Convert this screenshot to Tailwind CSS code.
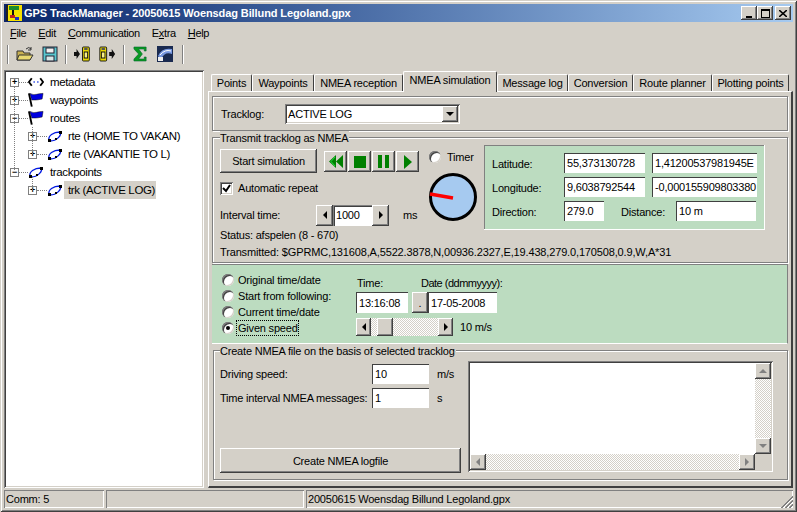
<!DOCTYPE html>
<html lang="en">
<head>
<meta charset="UTF-8">
<title>GPS TrackManager</title>
<script src="https://cdn.jsdelivr.net/npm/@tailwindcss/browser@4"></script>
</head>
<body class="bg-[#d4d0c8]">
<div class="w-[797px] h-[512px] overflow-hidden bg-[#d4d0c8] p-[4px] flex flex-col text-[11px] tracking-[-0.2px] leading-[14px] text-black font-['Liberation_Sans',sans-serif] shadow-[inset_1px_1px_0_#d4d0c8,inset_-1px_-1px_0_#404040,inset_2px_2px_0_#fff,inset_-2px_-2px_0_#808080]">

  <!-- title bar -->
  <div class="h-[18px] shrink-0 flex items-center bg-gradient-to-r from-[#0a246a] to-[#a6caf0] pl-[2px] pr-[2px]">
    <svg class="w-[16px] h-[16px] shrink-0" viewBox="0 0 16 16"><rect width="16" height="16" fill="#f6e000"/><rect x="3" y="1" width="10" height="4" fill="#1c8c2c"/><rect x="6" y="5" width="2" height="7" fill="#111"/><rect x="4" y="10" width="5" height="3" fill="#c02020"/><rect x="9" y="12" width="4" height="3" fill="#2030c0"/><rect x="0" y="0" width="2" height="16" fill="#222"/></svg>
    <span class="ml-[2px] font-bold text-[11px] tracking-[-0.1px] text-white whitespace-nowrap">GPS TrackManager - 20050615 Woensdag Billund Legoland.gpx</span>
    <div class="ml-auto flex">
      <div class="w-[16px] h-[14px] bg-[#d4d0c8] flex items-end justify-center pb-[2px] shadow-[inset_-1px_-1px_0_#404040,inset_1px_1px_0_#fff,inset_-2px_-2px_0_#808080]"><div class="w-[6px] h-[2px] bg-black"></div></div>
      <div class="w-[16px] h-[14px] bg-[#d4d0c8] flex items-center justify-center shadow-[inset_-1px_-1px_0_#404040,inset_1px_1px_0_#fff,inset_-2px_-2px_0_#808080]"><div class="w-[9px] h-[9px] border border-black border-t-2"></div></div>
      <div class="ml-[2px] w-[16px] h-[14px] bg-[#d4d0c8] flex items-center justify-center shadow-[inset_-1px_-1px_0_#404040,inset_1px_1px_0_#fff,inset_-2px_-2px_0_#808080]"><svg class="w-[8px] h-[7px]" viewBox="0 0 8 7"><path d="M0 0L8 7M8 0L0 7" stroke="#000" stroke-width="1.6"/></svg></div>
    </div>
  </div>

  <!-- menu -->
  <div class="h-[20px] mt-[1px] shrink-0 flex items-center pl-[6px] gap-[12px] tracking-[-0.35px]">
    <span><u>F</u>ile</span><span><u>E</u>dit</span><span><u>C</u>ommunication</span><span>E<u>x</u>tra</span><span><u>H</u>elp</span>
  </div>

  <!-- toolbar -->
  <div class="h-[22px] shrink-0 flex items-center pl-[3px]">
    <div class="w-[2px] h-[19px] border-l border-l-[#808080] border-r border-r-white"></div>
    <svg class="ml-[7px] w-[18px] h-[16px]" viewBox="0 0 18 16"><path d="M1 5h6l1 2h6v7H1z" fill="#c8b050" stroke="#333"/><path d="M3 9h14l-3 5H1z" fill="#e8d870" stroke="#333"/><path d="M10 3q3-3 5 0M15 1v3h-3" fill="none" stroke="#333"/></svg>
    <svg class="ml-[8px] w-[16px] h-[16px]" viewBox="0 0 16 16"><rect x="1" y="1" width="14" height="14" fill="#58c8d0" stroke="#223"/><rect x="4" y="2" width="8" height="5" fill="#f0f0f0" stroke="#223"/><rect x="4" y="10" width="8" height="5" fill="#d8e8e8" stroke="#223"/></svg>
    <div class="ml-[7px] w-[2px] h-[19px] border-l border-l-[#808080] border-r border-r-white"></div>
    <svg class="ml-[7px] w-[17px] h-[16px]" viewBox="0 0 20 16" preserveAspectRatio="none"><path d="M0 6h3V3l4 5-4 5v-3H0z" fill="#111"/><rect x="10" y="1" width="8" height="14" rx="1" fill="#e8d800" stroke="#111"/><rect x="12" y="6" width="4" height="6" fill="#f8f088" stroke="#111"/><rect x="12" y="2" width="4" height="2" fill="#555"/></svg>
    <svg class="ml-[8px] w-[17px] h-[16px]" viewBox="0 0 20 16" preserveAspectRatio="none"><rect x="1" y="1" width="8" height="14" rx="1" fill="#e8d800" stroke="#111"/><rect x="3" y="6" width="4" height="6" fill="#f8f088" stroke="#111"/><rect x="3" y="2" width="4" height="2" fill="#555"/><path d="M12 6h3V3l4 5-4 5v-3h-3z" fill="#111"/></svg>
    <div class="ml-[7px] w-[2px] h-[19px] border-l border-l-[#808080] border-r border-r-white"></div>
    <svg class="ml-[8px] w-[15px] h-[16px]" viewBox="0 0 16 16" preserveAspectRatio="none"><path d="M1 1h13v4h-2V3H6l4 5-4 5h6v-2h2v4H1v-2l5-5-5-5z" fill="#0a9a20" stroke="#063" stroke-width=".6"/></svg>
    <svg class="ml-[9px] w-[16px] h-[16px]" viewBox="0 0 16 16"><rect width="16" height="16" fill="#1a2a50"/><path d="M1 10Q5 1 15 3v5Q8 5 4 13z" fill="#7898e0"/><path d="M3 9Q8 3 14 5" stroke="#fff" fill="none"/><rect x="1" y="11" width="5" height="4" fill="#eee"/></svg>
    <div class="ml-[9px] w-[2px] h-[19px] border-l border-l-[#808080] border-r border-r-white"></div>
  </div>

  <!-- main -->
  <div class="mt-[5px] h-[418px] shrink-0 flex">
    <!-- tree -->
    <div class="relative w-[200px] h-full bg-white pt-[3px] text-[11.5px] tracking-[-0.35px] whitespace-nowrap shadow-[inset_1px_1px_0_#808080,inset_-1px_-1px_0_#fff,inset_2px_2px_0_#404040,inset_-2px_-2px_0_#d4d0c8]">
      <div class="absolute left-[10px] top-[16px] h-[84px] border-l border-dotted border-[#808080]"></div>
      <div class="absolute left-[28px] top-[57px] h-[27px] border-l border-dotted border-[#808080]"></div>
      <div class="absolute left-[28px] top-[107px] h-[13px] border-l border-dotted border-[#808080]"></div>

      <div class="h-[18px] flex items-center pl-[6px]">
        <div class="w-[9px] h-[9px] border border-[#808080] flex items-center justify-center text-[9px] leading-none font-bold bg-white">+</div>
        <div class="w-[9px] border-t border-dotted border-[#808080]"></div>
        <svg class="w-[16px] h-[12px]" viewBox="0 0 17 12"><path d="M4 2L1 6l3 4M13 2l3 4-3 4" fill="none" stroke="#000" stroke-width="2"/><path d="M6 6h1M10 6h1" stroke="#1030e0" stroke-width="2"/></svg>
        <span class="ml-[6px]">metadata</span>
      </div>
      <div class="h-[18px] flex items-center pl-[6px]">
        <div class="w-[9px] h-[9px] border border-[#808080] flex items-center justify-center text-[9px] leading-none font-bold bg-white">+</div>
        <div class="w-[9px] border-t border-dotted border-[#808080]"></div>
        <svg class="w-[16px] h-[16px]" viewBox="0 0 17 16"><path d="M1 1l3 14" stroke="#000" stroke-width="2"/><path d="M2 1q4 2 7 1t7-1l-1 6q-5 1-7 1t-4 0z" fill="#0000e0" stroke="#000" stroke-width=".5"/></svg>
        <span class="ml-[6px]">waypoints</span>
      </div>
      <div class="h-[18px] flex items-center pl-[6px]">
        <div class="w-[9px] h-[9px] border border-[#808080] flex items-center justify-center text-[9px] leading-none font-bold bg-white">&minus;</div>
        <div class="w-[9px] border-t border-dotted border-[#808080]"></div>
        <svg class="w-[16px] h-[16px]" viewBox="0 0 17 16"><path d="M1 1l3 14" stroke="#000" stroke-width="2"/><path d="M2 1q4 2 7 1t7-1l-1 6q-5 1-7 1t-4 0z" fill="#0000e0" stroke="#000" stroke-width=".5"/></svg>
        <span class="ml-[6px]">routes</span>
      </div>
      <div class="h-[18px] flex items-center pl-[24px]">
        <div class="w-[9px] h-[9px] border border-[#808080] flex items-center justify-center text-[9px] leading-none font-bold bg-white">+</div>
        <div class="w-[10px] border-t border-dotted border-[#808080]"></div>
        <svg class="w-[16px] h-[13px]" viewBox="0 0 16 13"><path d="M2 10C1 6 6 2 13 2C15 5 10 11 3 11z" fill="none" stroke="#0018e0" stroke-width="1.3"/><path d="M1 9h3v3H1zM12 1h3v3h-3zM8 8h2v2H8z" fill="#000"/></svg>
        <span class="ml-[5px]">rte (HOME TO VAKAN)</span>
      </div>
      <div class="h-[18px] flex items-center pl-[24px]">
        <div class="w-[9px] h-[9px] border border-[#808080] flex items-center justify-center text-[9px] leading-none font-bold bg-white">+</div>
        <div class="w-[10px] border-t border-dotted border-[#808080]"></div>
        <svg class="w-[16px] h-[13px]" viewBox="0 0 16 13"><path d="M2 10C1 6 6 2 13 2C15 5 10 11 3 11z" fill="none" stroke="#0018e0" stroke-width="1.3"/><path d="M1 9h3v3H1zM12 1h3v3h-3zM8 8h2v2H8z" fill="#000"/></svg>
        <span class="ml-[5px]">rte (VAKANTIE TO L)</span>
      </div>
      <div class="h-[18px] flex items-center pl-[6px]">
        <div class="w-[9px] h-[9px] border border-[#808080] flex items-center justify-center text-[9px] leading-none font-bold bg-white">&minus;</div>
        <div class="w-[9px] border-t border-dotted border-[#808080]"></div>
        <svg class="w-[16px] h-[13px]" viewBox="0 0 16 13"><path d="M2 10C1 6 6 2 13 2C15 5 10 11 3 11z" fill="none" stroke="#0018e0" stroke-width="1.3"/><path d="M1 9h3v3H1zM12 1h3v3h-3zM8 8h2v2H8z" fill="#000"/></svg>
        <span class="ml-[6px]">trackpoints</span>
      </div>
      <div class="h-[18px] flex items-center pl-[24px]">
        <div class="w-[9px] h-[9px] border border-[#808080] flex items-center justify-center text-[9px] leading-none font-bold bg-white">+</div>
        <div class="w-[10px] border-t border-dotted border-[#808080]"></div>
        <svg class="w-[16px] h-[13px]" viewBox="0 0 16 13"><path d="M2 10C1 6 6 2 13 2C15 5 10 11 3 11z" fill="none" stroke="#0018e0" stroke-width="1.3"/><path d="M1 9h3v3H1zM12 1h3v3h-3zM8 8h2v2H8z" fill="#000"/></svg>
        <span class="ml-[1px] w-[92px] bg-[#d4d0c8] pl-[4px] h-[18px] leading-[18px]">trk (ACTIVE LOG)</span>
      </div>
    </div>

    <!-- right pane -->
    <div class="ml-[4px] w-[585px] h-full flex flex-col">
      <!-- tabs -->
      <div class="h-[21px] shrink-0 flex items-end pl-[3px] relative z-10 whitespace-nowrap">
        <div class="w-[41px] h-[17px] text-center leading-[16px] border-t border-l border-white border-r border-r-[#404040] rounded-t-[2px]">Points</div>
        <div class="w-[62px] h-[17px] text-center leading-[16px] border-t border-l border-white border-r border-r-[#404040] rounded-t-[2px]">Waypoints</div>
        <div class="w-[89px] h-[17px] text-center leading-[16px] border-t border-l border-white border-r border-r-[#404040] rounded-t-[2px]">NMEA reception</div>
        <div class="w-[94px] h-[21px] -mb-[1px] bg-[#d4d0c8] text-center leading-[16px] border-t border-l border-white border-r border-r-[#404040] rounded-t-[2px]">NMEA simulation</div>
        <div class="w-[71px] h-[17px] text-center leading-[16px] border-t border-l border-white border-r border-r-[#404040] rounded-t-[2px]">Message log</div>
        <div class="w-[65px] h-[17px] text-center leading-[16px] border-t border-l border-white border-r border-r-[#404040] rounded-t-[2px]">Conversion</div>
        <div class="w-[79px] h-[17px] text-center leading-[16px] border-t border-l border-white border-r border-r-[#404040] rounded-t-[2px]">Route planner</div>
        <div class="w-[77px] h-[17px] text-center leading-[16px] border-t border-l border-white border-r border-r-[#404040] rounded-t-[2px]">Plotting points</div>
      </div>
      <!-- tab panel -->
      <div class="flex-1 border-t border-l border-t-white border-l-white border-r-2 border-b-2 border-r-[#404040] border-b-[#404040] pl-[3px] pt-[4px]">

        <!-- tracklog -->
        <div class="w-[576px] h-[35px] flex items-center pl-[8px] border border-[#808080] shadow-[inset_1px_1px_0_#fff,1px_1px_0_#fff]">
          <span class="w-[64px]">Tracklog:</span>
          <div class="w-[175px] h-[20px] bg-white flex items-center justify-between pl-[3px] pr-[2px] shadow-[inset_1px_1px_0_#808080,inset_-1px_-1px_0_#fff,inset_2px_2px_0_#404040,inset_-2px_-2px_0_#d4d0c8]">
            <span>ACTIVE LOG</span>
            <div class="w-[16px] h-[16px] bg-[#d4d0c8] flex items-center justify-center shadow-[inset_-1px_-1px_0_#404040,inset_1px_1px_0_#fff,inset_-2px_-2px_0_#808080]"><div class="border-x-[4px] border-x-transparent border-t-[4px] border-t-black"></div></div>
          </div>
        </div>

        <!-- transmit group -->
        <div class="relative mt-[6px] w-[576px] h-[126px] pl-[7px] pt-[7px] border border-[#808080] shadow-[inset_1px_1px_0_#fff,1px_1px_0_#fff]">
          <span class="absolute left-[7px] -top-[7px] bg-[#d4d0c8] pr-[1px]">Transmit tracklog as NMEA</span>
          <div class="flex h-[85px]">
            <div class="w-[209px] pt-[4px]">
              <div class="flex items-start">
                <div class="w-[97px] h-[24px] flex items-center justify-center shadow-[inset_-1px_-1px_0_#404040,inset_1px_1px_0_#fff,inset_-2px_-2px_0_#808080]">Start simulation</div>
                <div class="ml-[7px] mt-[2px] flex gap-[1px]">
                  <div class="w-[23px] h-[21px] flex items-center justify-center shadow-[inset_-1px_-1px_0_#404040,inset_1px_1px_0_#fff,inset_-2px_-2px_0_#808080]"><svg class="w-[14px] h-[13px]" viewBox="0 0 14 13"><path d="M7 0v13L0 6.5zM14 0v13L7 6.5z" fill="#008000"/><path d="M6 2L2 6.5l4 4.5" fill="none" stroke="#20e040"/></svg></div>
                  <div class="w-[23px] h-[21px] flex items-center justify-center shadow-[inset_-1px_-1px_0_#404040,inset_1px_1px_0_#fff,inset_-2px_-2px_0_#808080]"><div class="w-[12px] h-[12px] bg-[#008000]"></div></div>
                  <div class="w-[23px] h-[21px] flex items-center justify-center gap-[3px] shadow-[inset_-1px_-1px_0_#404040,inset_1px_1px_0_#fff,inset_-2px_-2px_0_#808080]"><div class="w-[4px] h-[13px] bg-[#008000]"></div><div class="w-[4px] h-[13px] bg-[#008000]"></div></div>
                  <div class="w-[23px] h-[21px] flex items-center justify-center shadow-[inset_-1px_-1px_0_#404040,inset_1px_1px_0_#fff,inset_-2px_-2px_0_#808080]"><div class="border-y-[7px] border-y-transparent border-l-[8px] border-l-[#008000]"></div></div>
                </div>
              </div>
              <div class="mt-[8px] h-[14px] flex items-center">
                <div class="w-[13px] h-[13px] bg-white flex items-center justify-center shadow-[inset_1px_1px_0_#808080,inset_-1px_-1px_0_#fff,inset_2px_2px_0_#404040,inset_-2px_-2px_0_#d4d0c8]"><svg class="w-[9px] h-[9px]" viewBox="0 0 9 9"><path d="M1 4l3 3 4-6" fill="none" stroke="#000" stroke-width="2"/></svg></div>
                <span class="ml-[5px]">Automatic repeat</span>
              </div>
              <div class="mt-[9px] h-[22px] flex items-center">
                <span class="w-[96px]">Interval time:</span>
                <div class="w-[17px] h-[21px] flex items-center justify-center shadow-[inset_-1px_-1px_0_#404040,inset_1px_1px_0_#fff,inset_-2px_-2px_0_#808080]"><div class="border-y-[4px] border-y-transparent border-r-[4px] border-r-black"></div></div>
                <div class="w-[39px] h-[21px] pl-[3px] bg-white flex items-center shadow-[inset_1px_1px_0_#808080,inset_2px_2px_0_#404040]">1000</div>
                <div class="w-[17px] h-[21px] flex items-center justify-center shadow-[inset_-1px_-1px_0_#404040,inset_1px_1px_0_#fff,inset_-2px_-2px_0_#808080]"><div class="border-y-[4px] border-y-transparent border-l-[4px] border-l-black"></div></div>
                <span class="ml-[14px]">ms</span>
              </div>
            </div>
            <div class="w-[55px] pt-[6px]">
              <div class="h-[12px] flex items-center">
                <div class="w-[12px] h-[12px] rounded-full bg-white shadow-[inset_1px_1px_0_#808080,inset_2px_2px_0_#404040,inset_-1px_-1px_0_#d4d0c8]"></div>
                <span class="ml-[6px]">Timer</span>
              </div>
              <svg class="-ml-[1px] mt-[9px] w-[50px] h-[50px]" viewBox="0 0 50 50"><circle cx="25" cy="25" r="22.5" fill="#a6caf0" stroke="#000" stroke-width="3"/><path d="M2 22L25 26" stroke="#f00" stroke-width="3.5"/></svg>
            </div>
            <!-- position box -->
            <div class="w-[281px] h-[85px] bg-[#bcdcc0] pt-[8px] pl-[8px] shadow-[inset_-1px_-1px_0_#fff,inset_1px_1px_0_#808080]">
              <div class="h-[20px] flex items-center">
                <span class="w-[72px] pt-[1px]">Latitude:</span>
                <div class="w-[81px] h-[20px] pl-[3px] bg-white flex items-center overflow-hidden whitespace-nowrap shadow-[inset_1px_1px_0_#404040,inset_-1px_-1px_0_#fff]">55,373130728</div>
                <div class="ml-[7px] w-[105px] h-[20px] pl-[3px] bg-white flex items-center overflow-hidden whitespace-nowrap shadow-[inset_1px_1px_0_#404040,inset_-1px_-1px_0_#fff]">1,41200537981945E</div>
              </div>
              <div class="mt-[4px] h-[20px] flex items-center">
                <span class="w-[72px] pt-[1px]">Longitude:</span>
                <div class="w-[81px] h-[20px] pl-[3px] bg-white flex items-center overflow-hidden whitespace-nowrap shadow-[inset_1px_1px_0_#404040,inset_-1px_-1px_0_#fff]">9,6038792544</div>
                <div class="ml-[7px] w-[105px] h-[20px] pl-[3px] bg-white flex items-center overflow-hidden whitespace-nowrap shadow-[inset_1px_1px_0_#404040,inset_-1px_-1px_0_#fff]">-0,000155909803380</div>
              </div>
              <div class="mt-[4px] h-[20px] flex items-center">
                <span class="w-[72px] pt-[1px]">Direction:</span>
                <div class="w-[40px] h-[20px] pl-[3px] bg-white flex items-center shadow-[inset_1px_1px_0_#404040,inset_-1px_-1px_0_#fff]">279.0</div>
                <span class="ml-[17px] w-[55px] pt-[1px]">Distance:</span>
                <div class="w-[80px] h-[20px] pl-[3px] bg-white flex items-center shadow-[inset_1px_1px_0_#404040,inset_-1px_-1px_0_#fff]">10 m</div>
              </div>
            </div>
          </div>
          <div class="h-[17px] mt-[-4px] flex items-center">Status: afspelen (8 - 670)</div>
          <div class="h-[17px] flex items-center whitespace-nowrap tracking-[-0.15px]">Transmitted: $GPRMC,131608,A,5522.3878,N,00936.2327,E,19.438,279.0,170508,0.9,W,A*31</div>
        </div>

        <!-- green time section -->
        <div class="mt-[1px] w-[576px] h-[80px] bg-[#bcdcc0] flex pl-[10px] pt-[7px] border-t border-t-[#808080] border-r border-r-[#808080] border-b border-b-white">
          <div class="w-[134px]">
            <div class="h-[16px] flex items-center"><div class="w-[12px] h-[12px] rounded-full bg-white shadow-[inset_1px_1px_0_#808080,inset_2px_2px_0_#404040,inset_-1px_-1px_0_#d4d0c8]"></div><span class="ml-[4px]">Original time/date</span></div>
            <div class="h-[16px] flex items-center"><div class="w-[12px] h-[12px] rounded-full bg-white shadow-[inset_1px_1px_0_#808080,inset_2px_2px_0_#404040,inset_-1px_-1px_0_#d4d0c8]"></div><span class="ml-[4px]">Start from following:</span></div>
            <div class="h-[16px] flex items-center"><div class="w-[12px] h-[12px] rounded-full bg-white shadow-[inset_1px_1px_0_#808080,inset_2px_2px_0_#404040,inset_-1px_-1px_0_#d4d0c8]"></div><span class="ml-[4px]">Current time/date</span></div>
            <div class="h-[16px] flex items-center"><div class="w-[12px] h-[12px] rounded-full bg-white flex items-center justify-center shadow-[inset_1px_1px_0_#808080,inset_2px_2px_0_#404040,inset_-1px_-1px_0_#d4d0c8]"><div class="w-[4px] h-[4px] rounded-full bg-black"></div></div><span class="ml-[3px] pl-[1px] outline-1 outline-dotted outline-black">Given speed</span></div>
          </div>
          <div class="pt-[4px]">
            <div class="h-[14px] flex"><span class="w-[65px] pl-[1px]">Time:</span><span class="tracking-[-0.5px]">Date (ddmmyyyy):</span></div>
            <div class="mt-[2px] h-[21px] flex">
              <div class="w-[52px] h-[21px] pl-[3px] bg-white flex items-center shadow-[inset_1px_1px_0_#404040,inset_-1px_-1px_0_#fff]">13:16:08</div>
              <div class="ml-[4px] w-[16px] h-[21px] bg-[#d4d0c8] flex items-center justify-center shadow-[inset_-1px_-1px_0_#404040,inset_1px_1px_0_#fff,inset_-2px_-2px_0_#808080]">.</div>
              <div class="w-[69px] h-[21px] pl-[3px] bg-white flex items-center shadow-[inset_1px_1px_0_#404040,inset_-1px_-1px_0_#fff]">17-05-2008</div>
            </div>
            <div class="mt-[5px] flex items-center">
              <div class="w-[97px] h-[18px] flex bg-[repeating-conic-gradient(#fff_0_25%,#d4d0c8_0_50%)] bg-[length:2px_2px]">
                <div class="w-[15px] h-[18px] bg-[#d4d0c8] flex items-center justify-center shadow-[inset_-1px_-1px_0_#404040,inset_1px_1px_0_#fff,inset_-2px_-2px_0_#808080]"><div class="border-y-[4px] border-y-transparent border-r-[4px] border-r-black"></div></div>
                <div class="ml-[6px] w-[16px] h-[18px] bg-[#d4d0c8] shadow-[inset_-1px_-1px_0_#404040,inset_1px_1px_0_#fff,inset_-2px_-2px_0_#808080]"></div>
                <div class="ml-auto w-[15px] h-[18px] bg-[#d4d0c8] flex items-center justify-center shadow-[inset_-1px_-1px_0_#404040,inset_1px_1px_0_#fff,inset_-2px_-2px_0_#808080]"><div class="border-y-[4px] border-y-transparent border-l-[4px] border-l-black"></div></div>
              </div>
              <span class="ml-[7px]">10 m/s</span>
            </div>
          </div>
        </div>

        <!-- create file group -->
        <div class="relative mt-[6px] ml-[1px] w-[575px] h-[130px] flex pl-[6px] pt-[10px] border border-[#808080] shadow-[inset_1px_1px_0_#fff,1px_1px_0_#fff]">
          <span class="absolute left-[6px] -top-[7px] bg-[#d4d0c8] pr-[1px]">Create NMEA file on the basis of selected tracklog</span>
          <div class="w-[241px] h-[112px] pt-[3px] flex flex-col">
            <div class="h-[20px] flex items-center">
              <span class="w-[152px]">Driving speed:</span>
              <div class="w-[57px] h-[20px] pl-[3px] bg-white flex items-center shadow-[inset_1px_1px_0_#404040,inset_-1px_-1px_0_#fff]">10</div>
              <span class="ml-[8px]">m/s</span>
            </div>
            <div class="mt-[4px] h-[20px] flex items-center">
              <span class="w-[152px]">Time interval NMEA messages:</span>
              <div class="w-[57px] h-[20px] pl-[3px] bg-white flex items-center shadow-[inset_1px_1px_0_#404040,inset_-1px_-1px_0_#fff]">1</div>
              <span class="ml-[8px]">s</span>
            </div>
            <div class="mt-auto h-[25px] flex items-center justify-center shadow-[inset_-1px_-1px_0_#404040,inset_1px_1px_0_#fff,inset_-2px_-2px_0_#808080]">Create NMEA logfile</div>
          </div>
          <div class="ml-[7px] w-[305px] h-[111px] p-[2px] bg-[#d4d0c8] flex flex-col shadow-[inset_1px_1px_0_#808080,inset_-1px_-1px_0_#fff,inset_2px_2px_0_#404040]">
            <div class="flex-1 flex">
              <div class="flex-1 bg-white"></div>
              <div class="w-[16px] flex flex-col bg-[repeating-conic-gradient(#fff_0_25%,#d4d0c8_0_50%)] bg-[length:2px_2px]">
                <div class="h-[16px] bg-[#d4d0c8] flex items-center justify-center shadow-[inset_-1px_-1px_0_#404040,inset_1px_1px_0_#fff,inset_-2px_-2px_0_#808080]"><div class="border-x-[4px] border-x-transparent border-b-[4px] border-b-[#808080]"></div></div>
                <div class="mt-auto h-[16px] bg-[#d4d0c8] flex items-center justify-center shadow-[inset_-1px_-1px_0_#404040,inset_1px_1px_0_#fff,inset_-2px_-2px_0_#808080]"><div class="border-x-[4px] border-x-transparent border-t-[4px] border-t-[#808080]"></div></div>
              </div>
            </div>
            <div class="h-[16px] shrink-0 flex">
              <div class="flex-1 flex bg-[repeating-conic-gradient(#fff_0_25%,#d4d0c8_0_50%)] bg-[length:2px_2px]">
                <div class="w-[16px] bg-[#d4d0c8] flex items-center justify-center shadow-[inset_-1px_-1px_0_#404040,inset_1px_1px_0_#fff,inset_-2px_-2px_0_#808080]"><div class="border-y-[4px] border-y-transparent border-r-[4px] border-r-[#808080]"></div></div>
                <div class="ml-auto w-[16px] bg-[#d4d0c8] flex items-center justify-center shadow-[inset_-1px_-1px_0_#404040,inset_1px_1px_0_#fff,inset_-2px_-2px_0_#808080]"><div class="border-y-[4px] border-y-transparent border-l-[4px] border-l-[#808080]"></div></div>
              </div>
              <div class="w-[16px]"></div>
            </div>
          </div>
        </div>
      </div>
    </div>
  </div>

  <!-- status bar -->
  <div class="mt-[2px] h-[18px] shrink-0 flex gap-[2px]">
    <div class="w-[100px] pl-[2px] flex items-center shadow-[inset_1px_1px_0_#808080,inset_-1px_-1px_0_#fff]">Comm: 5</div>
    <div class="w-[198px] shadow-[inset_1px_1px_0_#808080,inset_-1px_-1px_0_#fff]"></div>
    <div class="relative flex-1 pl-[2px] flex items-center whitespace-nowrap shadow-[inset_1px_1px_0_#808080,inset_-1px_-1px_0_#fff]">
      20050615 Woensdag Billund Legoland.gpx
      <svg class="absolute right-0 bottom-0 w-[13px] h-[13px]" viewBox="0 0 13 13"><path d="M13 1L1 13M13 2L2 13M13 5L5 13M13 6L6 13M13 9L9 13M13 10L10 13" stroke="#808080" fill="none"/><path d="M13 3L3 13M13 7L7 13M13 11L11 13" stroke="#fff" fill="none"/></svg>
    </div>
  </div>
</div>
</body>
</html>
